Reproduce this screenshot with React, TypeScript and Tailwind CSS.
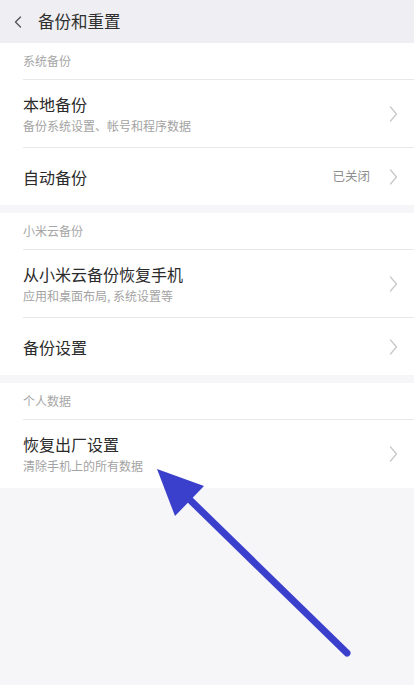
import { ChevronLeft } from "lucide-react"

type Row = {
  title: string
  subtitle?: string
  value?: string
}

type Section = {
  label: string
  rows: Row[]
}

const sections: Section[] = [
  {
    label: "系统备份",
    rows: [
      { title: "本地备份", subtitle: "备份系统设置、帐号和程序数据" },
      { title: "自动备份", value: "已关闭" },
    ],
  },
  {
    label: "小米云备份",
    rows: [
      { title: "从小米云备份恢复手机", subtitle: "应用和桌面布局, 系统设置等" },
      { title: "备份设置" },
    ],
  },
  {
    label: "个人数据",
    rows: [{ title: "恢复出厂设置", subtitle: "清除手机上的所有数据" }],
  },
]

function Chevron() {
  return (
    <svg width="9" height="16" viewBox="0 0 9 16" className="shrink-0">
      <polyline points="1.5,1 7.5,8 1.5,15" fill="none" stroke="#c6c6c6" strokeWidth="1.2" strokeLinecap="round" strokeLinejoin="round" />
    </svg>
  )
}

function SettingRow({ row, last }: { row: Row; last: boolean }) {
  return (
    <div className={`flex items-center pr-[16px] ${row.subtitle ? "h-[68px]" : "h-[57px]"} ${last ? "" : "border-b border-[#e8e8ea]"}`}>
      <div className="flex-1 min-w-0">
        <div className="text-[16px] leading-[22px] text-[#2b2b2b]">{row.title}</div>
        {row.subtitle && <div className="text-[12px] leading-[18px] text-[#a3a3a3] mt-[2px]">{row.subtitle}</div>}
      </div>
      {row.value && <span className="text-[12.5px] text-[#8f8f8f] mr-[19px]">{row.value}</span>}
      <Chevron />
    </div>
  )
}

export default function App() {
  return (
    <div
      className="relative h-[685px] w-[414px] overflow-hidden bg-[#f6f5f8]"
      style={{ fontFamily: '"Noto Sans CJK SC", "Noto Sans", sans-serif' }}
    >
      <div className="flex h-[43px] items-center bg-[#efeef2] pl-[8px]">
        <ChevronLeft className="h-[20px] w-[20px] text-[#555]" strokeWidth={1.6} />
        <span className="ml-[10px] text-[16.5px] text-[#2e2e2e]">备份和重置</span>
      </div>

      <div className="flex flex-col gap-[8px]">
        {sections.map((section) => (
          <div key={section.label} className="bg-white pl-[23px]">
            <div className="flex h-[37px] items-center border-b border-[#e8e8ea] text-[12px] text-[#a6a6a6]">
              {section.label}
            </div>
            {section.rows.map((row, i) => (
              <SettingRow key={row.title} row={row} last={i === section.rows.length - 1} />
            ))}
          </div>
        ))}
      </div>

      <svg className="absolute left-0 top-0" width="414" height="685" viewBox="0 0 414 685">
        <line x1="347" y1="653" x2="186" y2="496" stroke="#3a3fcc" strokeWidth="7" strokeLinecap="round" />
        <polygon points="157,469 204,486 175,516" fill="#3a3fcc" />
      </svg>
    </div>
  )
}
